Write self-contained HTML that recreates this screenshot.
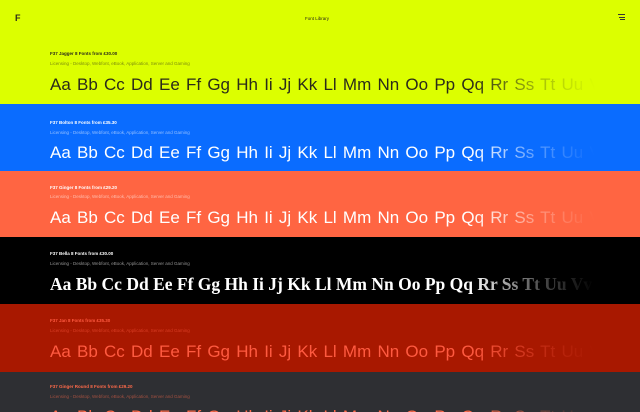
<!DOCTYPE html>
<html><head><meta charset="utf-8"><style>
*{margin:0;padding:0;box-sizing:border-box}
body{width:640px;height:412px;overflow:hidden;font-family:"Liberation Sans",sans-serif;position:relative}
.b{position:absolute;left:0;width:640px;overflow:hidden}
.t{position:absolute;left:50px;font-size:4.5px;font-weight:bold;white-space:nowrap}
.l{position:absolute;left:50px;font-size:4.5px;white-space:nowrap;opacity:.55}
.s{position:absolute;left:50px;font-size:17px;white-space:nowrap;letter-spacing:0;word-spacing:1.5px;
-webkit-mask-image:linear-gradient(90deg,#000 0,#000 420px,rgba(0,0,0,.3) 490px,transparent 545px);
mask-image:linear-gradient(90deg,#000 0,#000 420px,rgba(0,0,0,.3) 490px,transparent 545px)}
</style></head><body>
<div class="b" style="top:0;height:104px;background:#dcff00;color:#2b2b1a">
 <div style="position:absolute;left:15px;top:13px;font-size:9px;font-weight:bold">F</div>
 <div style="position:absolute;left:305px;top:16px;font-size:4.5px">Font Library</div>
 <div style="position:absolute;left:618px;top:14px;width:7px">
  <div style="height:1px;background:#333;margin-bottom:1.5px"></div>
  <div style="height:1px;background:#333;margin-bottom:1.5px;margin-left:1px"></div>
  <div style="height:1px;background:#333;margin-left:2px"></div></div>
 <div class="t" style="top:51px">F37 Jagger 8 Fonts from £30.00</div>
 <div class="l" style="top:61px">Licensing - Desktop, Webfont, eBook, Application, Server and Gaming</div>
 <div class="s" style="top:75px">Aa Bb Cc Dd Ee Ff Gg Hh Ii Jj Kk Ll Mm Nn Oo Pp Qq Rr Ss Tt Uu Vv</div>
</div>
<div class="b" style="top:104px;height:67px;background:#0a6cff;color:#fff">
 <div class="t" style="top:16px">F37 Bolton 8 Fonts from £35.30</div>
 <div class="l" style="top:26px">Licensing - Desktop, Webfont, eBook, Application, Server and Gaming</div>
 <div class="s" style="top:39px">Aa Bb Cc Dd Ee Ff Gg Hh Ii Jj Kk Ll Mm Nn Oo Pp Qq Rr Ss Tt Uu Vv</div>
</div>
<div class="b" style="top:171px;height:66px;background:#ff6542;color:#fff">
 <div class="t" style="top:14px">F37 Ginger 8 Fonts from £29.20</div>
 <div class="l" style="top:23px">Licensing - Desktop, Webfont, eBook, Application, Server and Gaming</div>
 <div class="s" style="top:37px">Aa Bb Cc Dd Ee Ff Gg Hh Ii Jj Kk Ll Mm Nn Oo Pp Qq Rr Ss Tt Uu Vv</div>
</div>
<div class="b" style="top:237px;height:67px;background:#000;color:#fff">
 <div class="t" style="top:14px">F37 Bella 8 Fonts from £30.00</div>
 <div class="l" style="top:24px">Licensing - Desktop, Webfont, eBook, Application, Server and Gaming</div>
 <div class="s" style="top:37px;font-family:'Liberation Serif',serif;font-weight:bold;font-size:17.5px;letter-spacing:0;word-spacing:0">Aa Bb Cc Dd Ee Ff Gg Hh Ii Jj Kk Ll Mm Nn Oo Pp Qq Rr Ss Tt Uu Vv</div>
</div>
<div class="b" style="top:304px;height:68px;background:#a81800;color:#ff5a40">
 <div class="t" style="top:14px">F37 Jan 8 Fonts from £35.30</div>
 <div class="l" style="top:24px">Licensing - Desktop, Webfont, eBook, Application, Server and Gaming</div>
 <div class="s" style="top:38px">Aa Bb Cc Dd Ee Ff Gg Hh Ii Jj Kk Ll Mm Nn Oo Pp Qq Rr Ss Tt Uu Vv</div>
</div>
<div class="b" style="top:372px;height:40px;background:#2e2f33;color:#ff6a4a">
 <div class="t" style="top:12px">F37 Ginger Round 8 Fonts from £29.20</div>
 <div class="l" style="top:22px">Licensing - Desktop, Webfont, eBook, Application, Server and Gaming</div>
 <div class="s" style="top:35px">Aa Bb Cc Dd Ee Ff Gg Hh Ii Jj Kk Ll Mm Nn Oo Pp Qq Rr Ss Tt Uu Vv</div>
</div>
</body></html>
